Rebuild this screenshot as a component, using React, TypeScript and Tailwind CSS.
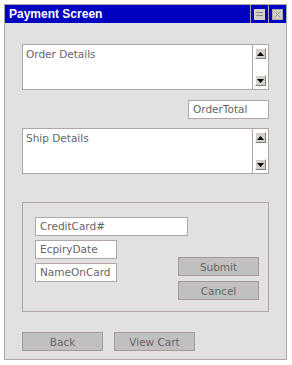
import React from "react";

const font = { fontFamily: "'DejaVu Sans', Verdana, sans-serif" };

function ScrollBtn({ up }: { up: boolean }) {
  return (
    <div className="w-[11px] h-[11px] bg-[#d4d0c8] border border-[#808080] border-t-white border-l-white flex items-center justify-center">
      <svg width="7" height="4" viewBox="0 0 7 4">
        {up ? <polygon points="3.5,0 7,4 0,4" fill="#000" /> : <polygon points="0,0 7,0 3.5,4" fill="#000" />}
      </svg>
    </div>
  );
}

function TextArea({ label }: { label: string }) {
  return (
    <div className="flex h-[46px] w-[247px] border border-[#b4a4a4] bg-white">
      <div className="flex-1 px-[3px] pt-[2px] text-[10.5px] text-[#666]">{label}</div>
      <div className="w-[16px] border-l border-[#b4a4a4] flex flex-col justify-between items-center py-[3px]">
        <ScrollBtn up />
        <ScrollBtn up={false} />
      </div>
    </div>
  );
}

function Input({ label, w }: { label: string; w: string }) {
  return (
    <div className={`${w} h-[19px] border border-[#b4a4a4] bg-white px-[4px] text-[10.5px] leading-[17px] text-[#666]`}>
      {label}
    </div>
  );
}

function Btn({ label }: { label: string }) {
  return (
    <div className="w-[81px] h-[19px] border border-[#a89898] bg-[#c0c0c0] text-[10.5px] leading-[18px] text-[#666] text-center">
      {label}
    </div>
  );
}

export default function App() {
  return (
    <div className="w-[292px] h-[365px] bg-white pt-[4px] pl-[4px]" style={font}>
      <div className="w-[283px] h-[356px] border border-[#b4a4a4] bg-[#e1e1e1] flex flex-col">
        <div className="h-[18px] bg-[#0000c0] flex items-stretch">
          <div
            className="flex-1 text-white font-bold text-[12px] leading-[18px] pl-[4px]"
            style={{ fontFamily: "'Liberation Sans', Arial, sans-serif" }}
          >
            Payment Screen
          </div>
          <div className="w-[18px] border-l border-[#b4a4a4] flex items-center justify-center">
            <div className="w-[11px] h-[11px] bg-[#d4d0c8] flex flex-col justify-center gap-[2px] px-[2px]">
              <div className="h-[1px] bg-[#888]" />
              <div className="h-[1px] bg-[#888]" />
            </div>
          </div>
          <div className="w-[18px] border-l border-[#b4a4a4] flex items-center justify-center">
            <div className="w-[11px] h-[11px] bg-[#d4d0c8] border border-[#aaa] flex items-center justify-center">
              <svg width="7" height="7" viewBox="0 0 7 7">
                <path d="M0.5 0.5 L6.5 6.5 M6.5 0.5 L0.5 6.5" stroke="#999" strokeWidth="1" />
              </svg>
            </div>
          </div>
        </div>
        <div className="pl-[17px] pt-[21px] flex flex-col">
          <TextArea label="Order Details" />
          <div className="flex justify-end w-[247px] mt-[10px]">
            <Input label="OrderTotal" w="w-[81px]" />
          </div>
          <div className="mt-[9px]">
            <TextArea label="Ship Details" />
          </div>
          <div className="mt-[28px] w-[247px] h-[110px] border border-[#b4a4a4] pl-[12px] pt-[14px] flex">
            <div className="flex flex-col gap-[4px]">
              <Input label="CreditCard#" w="w-[153px]" />
              <Input label="EcpiryDate" w="w-[82px]" />
              <Input label="NameOnCard" w="w-[82px]" />
            </div>
            <div className="flex flex-col gap-[5px] mt-[40px] -ml-[10px]">
              <Btn label="Submit" />
              <Btn label="Cancel" />
            </div>
          </div>
          <div className="mt-[20px] flex gap-[11px]">
            <Btn label="Back" />
            <Btn label="View Cart" />
          </div>
        </div>
      </div>
    </div>
  );
}
